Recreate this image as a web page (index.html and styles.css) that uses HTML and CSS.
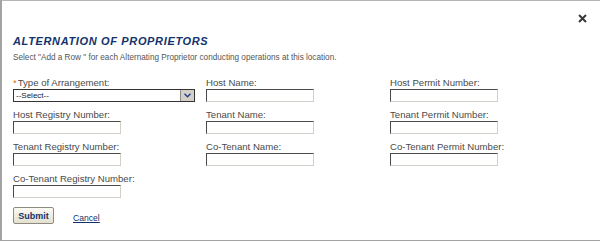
FILE: index.html
```html
<!DOCTYPE html>
<html lang="en">
<head>
  <meta charset="UTF-8" />
  <title>Alternation of Proprietors</title>
  <link rel="stylesheet" href="styles.css">
</head>
<body>
  <div class="dialog">
    <div class="dialog-bar">
      <button class="close-btn" title="Close">
        <svg width="9" height="9" viewBox="0 0 9 9"><path d="M1 1L8 8M8 1L1 8" stroke="#3a3a3a" stroke-width="2"/></svg>
      </button>
    </div>

    <h2 class="title">ALTERNATION OF PROPRIETORS</h2>
    <p class="hint">Select "Add a Row " for each Alternating Proprietor conducting operations at this location.</p>

    <form class="fields">
      <div class="field">
        <label><span class="req">*</span>Type of Arrangement:</label>
        <span class="select-wrap">
          <span class="select">--Select--</span>
          <span class="select-arrow">
            <svg width="7" height="5" viewBox="0 0 7 5"><path d="M0.5 0.8L3.5 3.8L6.5 0.8" fill="none" stroke="#1f3f8f" stroke-width="1.4"/></svg>
          </span>
        </span>
      </div>
      <div class="field">
        <label>Host Name:</label>
        <input class="text" type="text" />
      </div>
      <div class="field">
        <label>Host Permit Number:</label>
        <input class="text" type="text" />
      </div>

      <div class="field">
        <label>Host Registry Number:</label>
        <input class="text" type="text" />
      </div>
      <div class="field">
        <label>Tenant Name:</label>
        <input class="text" type="text" />
      </div>
      <div class="field">
        <label>Tenant Permit Number:</label>
        <input class="text" type="text" />
      </div>

      <div class="field">
        <label>Tenant Registry Number:</label>
        <input class="text" type="text" />
      </div>
      <div class="field">
        <label>Co-Tenant Name:</label>
        <input class="text" type="text" />
      </div>
      <div class="field">
        <label>Co-Tenant Permit Number:</label>
        <input class="text" type="text" />
      </div>

      <div class="field">
        <label>Co-Tenant Registry Number:</label>
        <input class="text" type="text" />
      </div>
    </form>

    <div class="actions">
      <button class="submit-btn">Submit</button>
      <a class="cancel" href="#">Cancel</a>
    </div>
  </div>
</body>
</html>
```

FILE: styles.css
```css
* {
  box-sizing: border-box;
}
body {
  margin: 0;
  background: #fff;
  font-family: "Liberation Sans", Arial, sans-serif;
  color: #444;
}
.dialog {
  height: 241px;
  border-top: 1px solid #b5b5b5;
  border-left: 2px solid #a3a3a3;
  border-bottom: 1px solid #a3a3a3;
  padding-left: 11px;
}
.dialog-bar {
  display: flex;
  justify-content: flex-end;
  height: 33px;
  padding: 13px 13px 0 0;
}
.close-btn {
  width: 9px;
  height: 9px;
  padding: 0;
  border: none;
  background: none;
  cursor: pointer;
  display: flex;
}
.title {
  margin: 0;
  font-size: 11px;
  line-height: 14px;
  font-weight: 700;
  font-style: italic;
  letter-spacing: 0.65px;
  color: #12336b;
}
.hint {
  margin: 4px 0 0;
  font-size: 8.2px;
  line-height: 11px;
  color: #555;
}
.fields {
  display: grid;
  grid-template-columns: 193px 184px 1fr;
  row-gap: 7px;
  margin-top: 14px;
}
.field {
  display: flex;
  flex-direction: column;
  align-items: flex-start;
}
.field label {
  font-size: 9.6px;
  line-height: 12px;
  color: #4a4a4a;
}
.req {
  color: #e06a00;
  margin-right: 1px;
}
.text {
  width: 108px;
  height: 13px;
  padding: 0 2px;
  border: 1px solid;
  border-color: #4a4a4a #d4d0c8 #d4d0c8 #4a4a4a;
  background: #fff;
  font: 9px "Liberation Sans", Arial, sans-serif;
}
.select-wrap {
  display: flex;
  width: 182px;
  height: 13px;
  border: 1px solid #333;
  background: #fff;
}
.select {
  flex: 1;
  padding-left: 2px;
  font-size: 8px;
  line-height: 11px;
  color: #222;
}
.select-arrow {
  width: 14px;
  display: flex;
  align-items: center;
  justify-content: center;
  background: #d4d0c8;
  border-left: 1px solid #8a8a8a;
}
.actions {
  display: flex;
  align-items: flex-end;
  gap: 19px;
  margin-top: 9px;
}
.submit-btn {
  width: 41px;
  height: 17px;
  padding: 0;
  border: 1px solid #8d8a80;
  border-radius: 2px;
  background: linear-gradient(#fbfaf4, #e4e0cf);
  font: 700 9px "Liberation Sans", Arial, sans-serif;
  color: #12336b;
  cursor: pointer;
}
.cancel {
  font-size: 8.6px;
  line-height: 11px;
  color: #12336b;
  text-decoration: underline;
}
```
